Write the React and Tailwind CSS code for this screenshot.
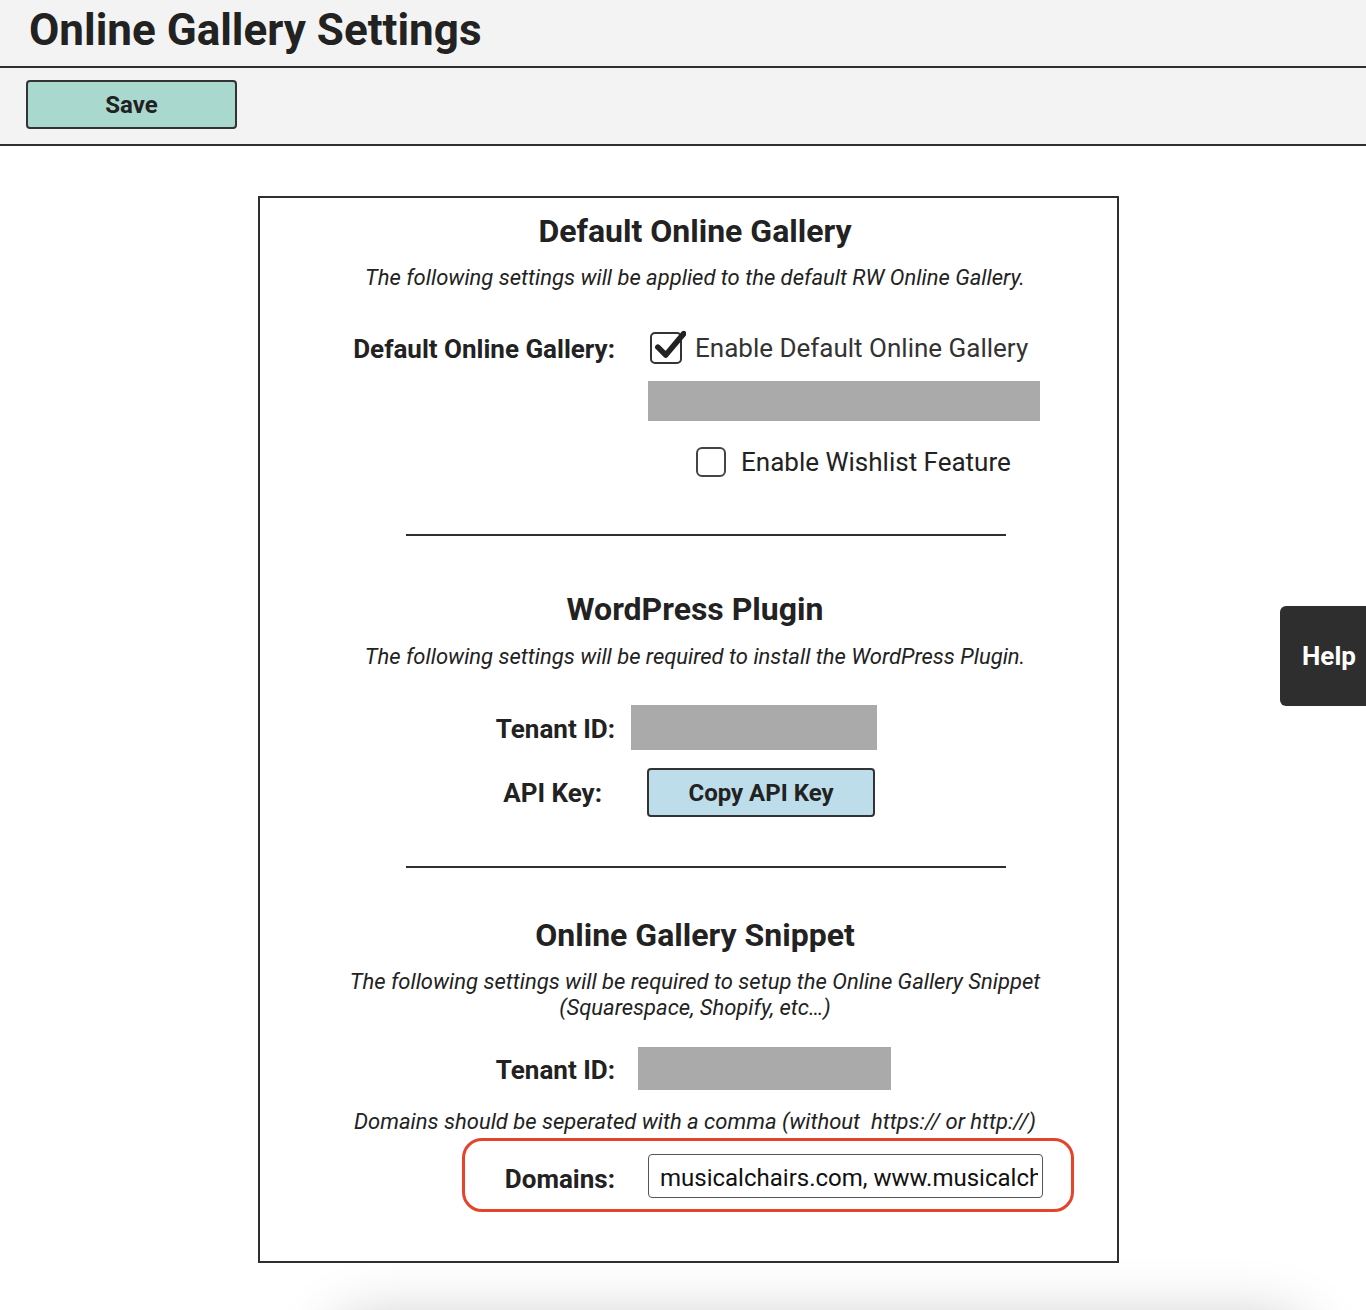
const font = { fontFamily: "Roboto, 'Noto Sans', sans-serif" };

const Heading = ({ children, className = "" }) => (
  <h2 className={`pl-[13px] text-center text-[32px] leading-[36px] font-bold text-[#222] ${className}`}>
    {children}
  </h2>
);

const Note = ({ children, className = "" }) => (
  <p className={`pl-[13px] text-center text-[22px] leading-[26px] italic text-[#222] ${className}`}>
    {children}
  </p>
);

const Divider = ({ className = "" }) => (
  <div className={`ml-[146px] w-[600px] h-[2px] bg-[#2f2f2f] ${className}`} />
);

const Label = ({ children, className = "" }) => (
  <span className={`text-[26px] leading-[30px] font-bold text-[#222] ${className}`}>{children}</span>
);

export default function App() {
  return (
    <div className="min-h-screen bg-white text-[#222] overflow-hidden" style={font}>
      <header className="h-[68px] bg-[#f3f3f3] border-b-2 border-[#2f2f2f] pl-[29px] flex items-center">
        <h1 className="text-[44px] leading-none font-bold text-[#222] -mt-[6px]">Online Gallery Settings</h1>
      </header>
      <div className="h-[78px] bg-[#f3f3f3] border-b-2 border-[#2f2f2f] pl-[26px] pt-[12px]">
        <button className="w-[211px] h-[49px] bg-[#a8d8ce] border-2 border-[#333] rounded-[4px] text-[24px] font-bold text-[#222]">
          Save
        </button>
      </div>

      <main className="pt-[50px]">
        <div className="ml-[258px] w-[861px] border-2 border-[#2f2f2f] pt-[15px] pb-[49px] bg-white relative z-10">
          <Heading>Default Online Gallery</Heading>
          <Note className="mt-[16px]">The following settings will be applied to the default RW Online Gallery.</Note>

          <div className="mt-[39px] flex">
            <div className="w-[355px] h-[38px] flex items-center justify-end">
              <Label>Default Online Gallery:</Label>
            </div>
            <div className="ml-[33px] flex flex-col">
              <label className="h-[36px] flex items-center">
                <span className="relative ml-[2px] w-[32px] h-[32px] border-2 border-[#333] rounded-[5px] bg-white">
                  <svg viewBox="0 0 32 32" className="absolute -left-[2px] -top-[6px] w-[36px] h-[36px]">
                    <path d="M7 17 L14 24 L30 5" fill="none" stroke="#222" strokeWidth="5" strokeLinecap="round" strokeLinejoin="round" />
                  </svg>
                </span>
                <span className="ml-[13px] text-[26px] text-[#333]">Enable Default Online Gallery</span>
              </label>
              <div className="mt-[15px] w-[392px] h-[40px] bg-[#aaaaaa]" />
              <label className="mt-[23px] h-[36px] flex items-center">
                <span className="ml-[48px] w-[30px] h-[30px] border-2 border-[#444] rounded-[6px] bg-white" />
                <span className="ml-[15px] text-[26px] text-[#222]">Enable Wishlist Feature</span>
              </label>
            </div>
          </div>

          <Divider className="mt-[54px]" />

          <Heading className="mt-[55px]">WordPress Plugin</Heading>
          <Note className="mt-[17px]">The following settings will be required to install the WordPress Plugin.</Note>

          <div className="mt-[35px] flex items-center">
            <div className="w-[355px] text-right pt-[4px]">
              <Label>Tenant ID:</Label>
            </div>
            <div className="ml-[16px] w-[246px] h-[45px] bg-[#aaaaaa]" />
          </div>
          <div className="mt-[18px] flex items-center">
            <div className="w-[342px] text-right pt-[2px]">
              <Label>API Key:</Label>
            </div>
            <button className="ml-[45px] w-[228px] h-[49px] bg-[#bcdde9] border-2 border-[#333] rounded-[4px] text-[24px] font-bold text-[#222]">
              Copy API Key
            </button>
          </div>

          <Divider className="mt-[49px]" />

          <Heading className="mt-[49px]">Online Gallery Snippet</Heading>
          <Note className="mt-[16px]">
            The following settings will be required to setup the Online Gallery Snippet
            <br />
            (Squarespace, Shopify, etc…)
          </Note>

          <div className="mt-[26px] flex items-center">
            <div className="w-[355px] text-right pt-[4px]">
              <Label>Tenant ID:</Label>
            </div>
            <div className="ml-[23px] w-[253px] h-[43px] bg-[#aaaaaa]" />
          </div>

          <Note className="mt-[19px]">Domains should be seperated with a comma (without&nbsp; https:// or http://)</Note>

          <div className="mt-[3px] ml-[202px] w-[612px] h-[74px] border-[3px] border-[#e5432a] rounded-[20px] flex items-center">
            <div className="w-[150px] text-right pt-[8px]">
              <Label>Domains:</Label>
            </div>
            <input
              readOnly
              value="musicalchairs.com, www.musicalchairs.com"
              className="ml-[33px] mt-[2px] w-[395px] h-[44px] border-[1.5px] border-[#555] rounded-[4px] pl-[11px] pr-[4px] pt-[3px] text-[24px] text-[#111] bg-white outline-none"
              style={font}
            />
          </div>
        </div>

        <div className="mt-[56px] ml-[330px] w-[980px] h-[200px] bg-white rounded-[40px] shadow-[0_0_60px_rgba(0,0,0,0.22)]" />
      </main>

      <div className="fixed right-0 top-[606px] w-[86px] h-[100px] bg-[#2e2e2e] rounded-l-[6px] flex items-center pl-[22px]">
        <span className="text-[26px] font-bold text-white">Help</span>
      </div>
    </div>
  );
}
